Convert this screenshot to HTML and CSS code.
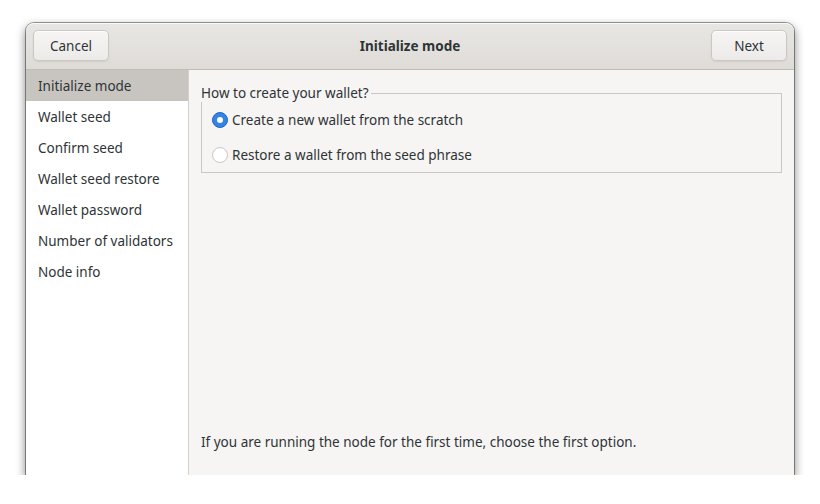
FILE: index.html
```html
<!DOCTYPE html>
<html>
<head>
<meta charset="utf-8">
<link rel="stylesheet" href="styles.css">
</head>
<body>
<div class="window">
  <header class="headerbar">
    <button class="btn">Cancel</button>
    <div class="title">Initialize mode</div>
    <button class="btn">Next</button>
  </header>
  <div class="main">
    <nav class="sidebar">
      <div class="row selected">Initialize mode</div>
      <div class="row">Wallet seed</div>
      <div class="row">Confirm seed</div>
      <div class="row">Wallet seed restore</div>
      <div class="row">Wallet password</div>
      <div class="row">Number of validators</div>
      <div class="row">Node info</div>
    </nav>
    <section class="content">
      <div class="frame">
        <div class="frame-label">How to create your wallet?</div>
        <div class="frame-box">
          <div class="radio-row"><span class="radio checked"></span><span>Create a new wallet from the scratch</span></div>
          <div class="radio-row"><span class="radio"></span><span>Restore a wallet from the seed phrase</span></div>
        </div>
      </div>
      <div class="spacer"></div>
      <p class="hint">If you are running the node for the first time, choose the first option.</p>
    </section>
  </div>
</div>
</body>
</html>
```
FILE: styles.css
```css
* { box-sizing: border-box; }
html, body { margin: 0; padding: 0; background: #ffffff; }
body {
  font-family: "Noto Sans", "Open Sans", sans-serif;
  font-size: 13.5px;
  color: #2e3436;
  padding: 23px 26px 0 26px;
}
.window {
  width: 768px;
  height: 452px;
  border-radius: 8px 8px 0 0;
  background: #f6f5f4;
  box-shadow: 0 0 0 1px rgba(0,0,0,0.38), 0 4px 10px 1px rgba(0,0,0,0.45);
  display: flex;
  flex-direction: column;
  overflow: hidden;
}
.headerbar {
  height: 47px;
  flex: none;
  display: flex;
  align-items: center;
  justify-content: space-between;
  padding: 0 7px 1px 7px;
  background: linear-gradient(to bottom, #e8e6e3, #dfdcd8);
  border-bottom: 1px solid #c0bbb5;
  border-radius: 8px 8px 0 0;
  box-shadow: inset 0 1px rgba(255,255,255,0.8);
}
.title {
  font-weight: bold;
  font-size: 13.5px;
  color: #2e3436;
}
.btn {
  width: 76px;
  height: 31px;
  font: inherit;
  color: #2e3436;
  border: 1px solid #cdc7c2;
  border-radius: 5px;
  background: linear-gradient(to bottom, #f6f5f4, #edebe9);
  box-shadow: inset 0 1px rgba(255,255,255,0.9), 0 1px 2px rgba(0,0,0,0.07);
  padding: 0;
}
.main {
  flex: 1;
  display: flex;
  min-height: 0;
}
.sidebar {
  width: 163px;
  flex: none;
  background: #ffffff;
  border-right: 1px solid #d5d0cc;
}
.row {
  height: 31px;
  line-height: 29px;
  padding: 2px 0 0 12px;
  white-space: nowrap;
}
.row.selected { background: #c8c5c1; }
.content {
  flex: 1;
  display: flex;
  flex-direction: column;
  padding: 14px 12px 0 12px;
}
.frame { display: flex; flex-direction: column; }
.frame-label {
  align-self: flex-start;
  line-height: 17px;
  height: 18px;
  padding: 1px 2px 0 0;
  background: #f6f5f4;
  position: relative;
  z-index: 1;
  margin-bottom: -9px;
}
.frame-box {
  border: 1px solid #cdc7c2;
  padding-top: 8px;
}
.radio-row {
  height: 35px;
  display: flex;
  align-items: center;
  padding-left: 10px;
  gap: 4px;
}
.radio {
  width: 16px;
  height: 16px;
  border-radius: 50%;
  border: 1px solid #cdc7c2;
  background: #ffffff;
  flex: none;
}
.radio.checked {
  border-color: #1b6acb;
  background: #3584e4;
  display: flex;
  align-items: center;
  justify-content: center;
}
.radio.checked::after {
  content: "";
  width: 6px;
  height: 6px;
  border-radius: 50%;
  background: #ffffff;
}
.spacer { flex: 1; }
.hint {
  margin: 0 0 24px 0;
  line-height: 17px;
}
```
